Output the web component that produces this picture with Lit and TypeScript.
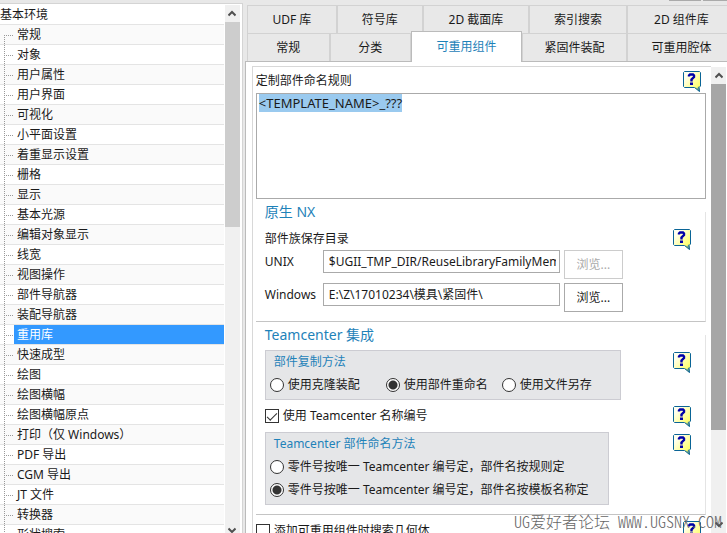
import { LitElement, html, css, svg } from "lit";
import { customElement, property, query, state } from "lit/decorators.js";
import { classMap } from "lit/directives/class-map.js";

const TREE = [
  "常规", "对象", "用户属性", "用户界面", "可视化", "小平面设置", "着重显示设置",
  "栅格", "显示", "基本光源", "编辑对象显示", "线宽", "视图操作", "部件导航器",
  "装配导航器", "重用库", "快速成型", "绘图", "绘图横幅", "绘图横幅原点",
  "打印（仅 Windows）", "PDF 导出", "CGM 导出", "JT 文件", "转换器", "形状搜索",
];
const TABS_BACK = ["UDF 库", "符号库", "2D 截面库", "索引搜索", "2D 组件库"];
const TABS_FRONT = ["常规", "分类", "可重用组件", "紧固件装配", "可重用腔体"];

const chevron = (d: string) => html`
  <svg width="8" height="7" viewBox="0 0 8 7" aria-hidden="true">
    ${svg`<path d=${d} fill="none" stroke="#505050" stroke-width="2"/>`}
  </svg>`;

/** Vertical scroll bar with arrow buttons at both ends. */
@customElement("scroll-bar")
export class ScrollBar extends LitElement {
  @property({ type: Number }) size = 50;

  static styles = css`
    :host {
      display: flex;
      flex-direction: column;
      flex: none;
      width: 15px;
      background: #f0f0f0;
    }
    button {
      display: flex;
      align-items: center;
      justify-content: center;
      flex: none;
      height: 17px;
      padding: 0;
      border: 0;
      background: none;
    }
    .track {
      flex: 1;
      min-height: 0;
    }
    .thumb {
      background: var(--thumb, #cdcdcd);
    }
  `;

  render() {
    return html`
      <button aria-label="向上滚动">${chevron("M0.5 5.5 L4 2 L7.5 5.5")}</button>
      <div class="track"><div class="thumb" style="height:${this.size}%"></div></div>
      <button aria-label="向下滚动">${chevron("M0.5 1.5 L4 5 L7.5 1.5")}</button>
    `;
  }
}

@customElement("help-button")
export class HelpButton extends LitElement {
  static styles = css`
    :host {
      display: block;
      flex: none;
      width: 18px;
      height: 22px;
    }
    button {
      display: block;
      padding: 0;
      border: 0;
      background: none;
    }
    svg {
      display: block;
    }
  `;

  render() {
    return html`
      <button aria-label="帮助">
        <svg width="18" height="22" viewBox="0 0 18 22">
          <defs>
            <linearGradient id="g" x1="0" y1="0" x2="1" y2="1">
              <stop offset="0.2" stop-color="#fffff0" />
              <stop offset="0.8" stop-color="#ffff70" />
            </linearGradient>
          </defs>
          <path d="M1.5 1.5 H16.5 L17.5 2.5 V16 L16 17.5 L16.5 21.5 L11.5 17.5 H1.5 L0.5 16.5 V2.5 Z"
            fill="url(#g)" stroke="#0a6496" />
          <path d="M12 17 L16.5 22 L16.5 17 L15 16.5 L14.5 18.5 Z" fill="#0a6496" opacity="0.6" />
          <path d="M6 6.5 V5.5 L7 4.5 H10 L11 5.5 V7 L8.5 9.5 V11.5" fill="none" stroke="#0000a8" stroke-width="2.4" />
          <rect x="7" y="12.5" width="3" height="2.5" fill="#0000a8" />
        </svg>
      </button>
    `;
  }
}

@customElement("app-root")
export class AppRoot extends LitElement {
  @state() private selected = "重用库";
  @query("textarea") private rule!: HTMLTextAreaElement;

  static styles = css`
    :host {
      display: flex;
      position: relative;
      height: 100vh;
      overflow: hidden;
      box-sizing: border-box;
      background: #e8e8e8;
      color: #1a1a1a;
      font: 12px/20px "Noto Sans", "Noto Sans CJK SC", sans-serif;
    }
    *, *::before {
      box-sizing: border-box;
    }
    button, input, textarea {
      font: inherit;
      color: inherit;
      margin: 0;
    }

    /* navigation tree */
    .nav {
      display: flex;
      flex: 0 0 33.4%;
      margin-top: 3px;
      padding-right: 2px;
      border: solid #d4d4d4;
      border-width: 1px 1px 0 0;
      background: #fff;
    }
    .tree {
      flex: 1;
      min-width: 0;
      margin: 0;
      padding: 1px 1px 0 0;
      overflow: hidden;
      list-style: none;
      white-space: nowrap;
    }
    .node {
      display: flex;
      height: 20px;
      border-bottom: 1px solid #e4e4e4;
      line-height: 19px;
    }
    .node:nth-child(even) {
      background: #fafafa;
    }
    .branch {
      flex: none;
      width: 14px;
      height: 20px;
      background:
        repeating-linear-gradient(to bottom, #999 0 1px, transparent 1px 2px) 4px 0 / 1px 20px no-repeat,
        repeating-linear-gradient(to right, #999 0 1px, transparent 1px 2px) 6px 10px / 8px 1px no-repeat;
    }
    .branch.first {
      background-position: 4px 10px, 6px 10px;
    }
    .name {
      flex: 1;
      height: 19px;
      padding-left: 3px;
    }
    .selected .name {
      background: #3399ff;
      color: #fff;
    }
    .nav scroll-bar {
      margin-top: 1px;
      margin-bottom: -6px;
    }

    /* tab strip */
    .main {
      display: flex;
      flex-direction: column;
      flex: 1;
      min-width: 0;
      padding-left: 2px;
    }
    .top {
      display: flex;
      justify-content: flex-end;
      gap: 2px;
      height: 5px;
    }
    .top i {
      width: 32px;
      height: 1px;
      background: #aaa;
    }
    .top i:last-child {
      width: 24px;
    }
    .tabs {
      display: grid;
      height: 28px;
      margin-left: 2px;
    }
    .back {
      grid-template-columns: 90fr 86fr 106fr 98fr 100fr;
    }
    .front {
      grid-template-columns: 83fr 81fr 111fr 105fr 100fr;
    }
    .tab {
      padding: 0;
      border: solid #d2d2d2;
      border-width: 1px 1px 0 1px;
      background: #e8e8e8;
      text-align: center;
      white-space: nowrap;
    }
    .tab:last-child {
      padding-left: 8px;
      border-right: 0;
    }
    .tab.active {
      position: relative;
      height: 31px;
      margin: -2px 0 0;
      border-color: #bbb;
      background: #fff;
      color: #1e82b9;
    }

    /* page */
    .page {
      display: flex;
      flex: 1;
      min-height: 0;
      padding: 4px 1px 0 6px;
      border: solid #bbb;
      border-width: 1px 0 0 1px;
      background: #fff;
    }
    .content {
      flex: 1;
      min-width: 0;
      padding: 0 5px 0 3px;
      border: solid #d8d8d8;
      border-width: 1px 0 0 1px;
      overflow: hidden;
    }
    .page scroll-bar {
      --thumb: #a6a6a6;
      margin-top: 1px;
    }
    .line {
      display: flex;
      align-items: center;
      justify-content: space-between;
      padding-right: 5px;
    }
    .line.head {
      height: 26px;
      padding-top: 2px;
    }
    .line.tail {
      height: 32px;
    }
    textarea {
      display: block;
      width: 100%;
      height: 106px;
      padding: 1px 2px;
      border: 1px solid #aaa;
      outline: 0;
      resize: none;
      font-size: 13px;
      line-height: 17px;
    }
    textarea::selection {
      background: rgb(153 201 239 / 0.99);
      color: #1a1a1a;
    }
    fieldset {
      min-width: 0;
      margin: 0;
      padding: 0;
      border: 0;
    }
    legend {
      padding: 0;
    }
    .group {
      margin-top: 3px;
      padding: 0 14px 9px 9px;
      border: solid #e4e4e4;
      border-width: 0 1px 1px 0;
      border-bottom-color: #c4c4c4;
    }
    .group > legend {
      height: 20px;
      font-size: 14px;
      color: #1e82b9;
    }
    .line.dir {
      height: 28px;
      padding: 6px 0 0;
    }
    .field {
      display: grid;
      grid-template-columns: 58px minmax(0, 237px) 59px;
      align-items: start;
      height: 29px;
      line-height: 23px;
    }
    .field + .field {
      margin-top: 4px;
    }
    .field input {
      width: 100%;
      height: 23px;
      padding: 0 3px 0 5px;
      border: 1px solid #aaa;
      outline: 0;
      background: #fff;
    }
    .field button {
      height: 29px;
      margin-left: 4px;
      margin-right: -4px;
      padding: 0;
      border: 1px solid #aaa;
      background: #fff;
    }
    .field button:disabled {
      border-color: #ccc;
      color: #aaa;
    }
    .line.boxed {
      align-items: flex-start;
      padding: 5px 0 0;
    }
    .line.boxed help-button {
      margin-top: 1px;
    }
    .line.option {
      height: 27px;
      padding: 5px 0 0;
    }
    .box {
      padding: 0 2px 3px 4px;
      border: 1px solid #ccccd2;
      background: #e5e6e8;
    }
    .box legend {
      float: left;
      width: 100%;
      height: 22px;
      padding-left: 4px;
      line-height: 22px;
      color: #1e82b9;
    }
    .choices {
      clear: both;
      display: grid;
      grid-auto-rows: 23px;
    }
    .columns {
      grid-template-columns: repeat(3, 116px);
    }
    .rows {
      padding-right: 17px;
      white-space: nowrap;
    }
    label.pick {
      display: flex;
      align-items: center;
      gap: 4px;
    }
    .pick input {
      flex: none;
      appearance: none;
      display: grid;
      place-items: center;
      width: 14px;
      height: 14px;
      border: 1px solid #333;
      background: #fff;
    }
    .pick input[type="radio"] {
      border-radius: 50%;
    }
    .pick input[type="radio"]:checked {
      background: radial-gradient(circle at center, #333 0 4px, #fff 5px);
    }
    .pick input[type="checkbox"]:checked::before {
      content: "";
      width: 10px;
      height: 5px;
      margin-top: -2px;
      border: solid #333;
      border-width: 0 0 1px 1px;
      transform: rotate(-45deg);
    }

    .mark {
      position: absolute;
      right: 5px;
      bottom: 2px;
      color: #666;
      font: 300 16px/20px "Noto Sans CJK SC", sans-serif;
      font-feature-settings: "hwid";
      white-space: nowrap;
      pointer-events: none;
    }
  `;

  firstUpdated() {
    this.rule.focus();
    this.rule.select();
  }

  private radio(name: string, text: string, checked = false) {
    return html`<label class="pick"><input type="radio" name=${name} .checked=${checked} />${text}</label>`;
  }

  private tab(text: string, active = false) {
    return html`<button role="tab" aria-selected=${active} class=${classMap({ tab: true, active })}>${text}</button>`;
  }

  render() {
    return html`
      <nav class="nav">
        <ul class="tree">
          <li class="node">基本环境</li>
          ${TREE.map((t, i) => html`
            <li class=${classMap({ node: true, selected: t === this.selected })}
              @click=${() => (this.selected = t)}>
              <span class=${classMap({ branch: true, first: i === 0 })}></span>
              <span class="name">${t}</span>
            </li>`)}
        </ul>
        <scroll-bar .size=${41}></scroll-bar>
      </nav>
      <main class="main">
        <div class="top"><i></i><i></i></div>
        <div class="tabs back" role="tablist">${TABS_BACK.map((t) => this.tab(t))}</div>
        <div class="tabs front" role="tablist">${TABS_FRONT.map((t) => this.tab(t, t === "可重用组件"))}</div>
        <div class="page">
          <div class="content">
            <div class="line head"><label for="rule">定制部件命名规则</label><help-button></help-button></div>
            <textarea id="rule" spellcheck="false" .value=${"<TEMPLATE_NAME>_???"}></textarea>

            <fieldset class="group">
              <legend>原生 NX</legend>
              <div class="line dir"><span>部件族保存目录</span><help-button></help-button></div>
              <div class="field">
                <label for="unix">UNIX</label>
                <input id="unix" .value=${"$UGII_TMP_DIR/ReuseLibraryFamilyMembers"} />
                <button disabled>浏览...</button>
              </div>
              <div class="field">
                <label for="win">Windows</label>
                <input id="win" .value=${"E:\\Z\\17010234\\模具\\紧固件\\"} />
                <button>浏览...</button>
              </div>
            </fieldset>

            <fieldset class="group">
              <legend>Teamcenter 集成</legend>
              <div class="line boxed">
                <fieldset class="box">
                  <legend>部件复制方法</legend>
                  <div class="choices columns">
                    ${this.radio("copy", "使用克隆装配")}
                    ${this.radio("copy", "使用部件重命名", true)}
                    ${this.radio("copy", "使用文件另存")}
                  </div>
                </fieldset>
                <help-button></help-button>
              </div>
              <div class="line option">
                <label class="pick"><input type="checkbox" checked />使用 Teamcenter 名称编号</label>
                <help-button></help-button>
              </div>
              <div class="line boxed">
                <fieldset class="box">
                  <legend>Teamcenter 部件命名方法</legend>
                  <div class="choices rows">
                    ${this.radio("naming", "零件号按唯一 Teamcenter 编号定，部件名按规则定")}
                    ${this.radio("naming", "零件号按唯一 Teamcenter 编号定，部件名按模板名称定", true)}
                  </div>
                </fieldset>
                <help-button></help-button>
              </div>
            </fieldset>

            <div class="line tail">
              <label class="pick"><input type="checkbox" />添加可重用组件时搜索几何体</label>
              <help-button></help-button>
            </div>
          </div>
          <scroll-bar .size=${80}></scroll-bar>
        </div>
      </main>
      <div class="mark">UG爱好者论坛 WWW.UGSNX.COM</div>
    `;
  }
}
